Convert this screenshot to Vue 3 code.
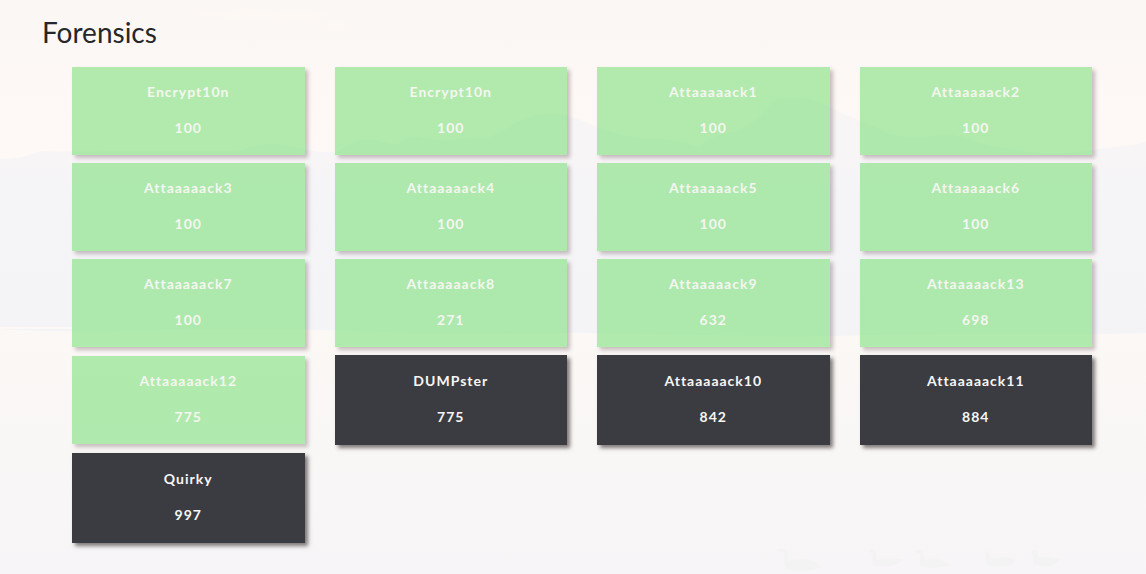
<script setup>
const challenges = [
  { name: 'Encrypt10n', value: 100, solved: true },
  { name: 'Encrypt10n', value: 100, solved: true },
  { name: 'Attaaaaack1', value: 100, solved: true },
  { name: 'Attaaaaack2', value: 100, solved: true },
  { name: 'Attaaaaack3', value: 100, solved: true },
  { name: 'Attaaaaack4', value: 100, solved: true },
  { name: 'Attaaaaack5', value: 100, solved: true },
  { name: 'Attaaaaack6', value: 100, solved: true },
  { name: 'Attaaaaack7', value: 100, solved: true },
  { name: 'Attaaaaack8', value: 271, solved: true },
  { name: 'Attaaaaack9', value: 632, solved: true },
  { name: 'Attaaaaack13', value: 698, solved: true },
  { name: 'Attaaaaack12', value: 775, solved: true },
  { name: 'DUMPster', value: 775, solved: false },
  { name: 'Attaaaaack10', value: 842, solved: false },
  { name: 'Attaaaaack11', value: 884, solved: false },
  { name: 'Quirky', value: 997, solved: false },
]
</script>

<template>
  <div class="page">
    <svg class="scenery" viewBox="0 0 1146 574" preserveAspectRatio="none" aria-hidden="true">
      <defs>
        <linearGradient id="sky" x1="0" y1="0" x2="0" y2="1">
          <stop offset="0" stop-color="#fbf7f4" />
          <stop offset="0.45" stop-color="#fef9f6" />
          <stop offset="1" stop-color="#fef9f6" />
        </linearGradient>
        <linearGradient id="hills" x1="0" y1="0" x2="0" y2="1">
          <stop offset="0" stop-color="#f8f5f5" />
          <stop offset="0.25" stop-color="#f7f5f6" />
          <stop offset="0.4" stop-color="#f5f4f7" />
          <stop offset="1" stop-color="#f4f4f7" />
        </linearGradient>
        <linearGradient id="lake" x1="0" y1="0" x2="0" y2="1">
          <stop offset="0" stop-color="#fbf8f5" />
          <stop offset="0.5" stop-color="#f9f7f6" />
          <stop offset="1" stop-color="#f7f5f7" />
        </linearGradient>
      </defs>
      <rect width="1146" height="340" fill="url(#sky)" />
      <path class="cloud" d="M192 14c20-3 32 2 47-5 15-3 25 4 40 3 20-4 35 0 50 4-35 5-60 1-75 1-25 3-40-2-62-3zM326 25c8-6 14-3 22 0-6 4-14 3-22 0z" />
      <path fill="url(#hills)" d="M0 159c18 0 28-3 41-8 28 1 50 0 70 0h126c20-6 34-10 48-6 24 6 35 8 51 7 15-10 26-13 40-12 12 3 18 6 25 2 8-6 12-6 16-5 10 3 20 3 34 4 12-4 20-4 33-2 12-3 24-12 34-17 12-5 18-8 30-8 12-1 20 2 30 5 26 11 45 18 70 20 23-1 37 4 51 8 10-10 22-14 36-15 13-8 26-14 31-22 4-8 10-11 20-12 25-1 36 5 50 12 18 9 32 13 48 21 14 7 34 8 66 3 20 4 31 12 59 14 30 8 69 5 89 1 13-2 29-1 49-8v200H0z" />
      <path fill="url(#lake)" d="M0 329c80 5 140 1 215 0 100-2 180 6 290 4 130-1 210 4 330 3 110-4 220-1 311-3v241H0z" />
      <path class="shore" d="M0 328h72M1092 346l54-2" />
      <g class="swans">
        <path d="M778 551c3-4 9-3 10 2v8c10-3 27-3 33 6-10 5-24 5-35 2-3-5-1-11-2-16-2-2-4-1-6-2z" />
        <path d="M869 552c3-4 7-2 7 2v6c9-2 18-1 26-1-2 6-10 8-29 7-2-5 1-9-1-13z" />
        <path d="M915 552c3-4 8-2 8 3 1 3 3 4 3 5 9-3 17 0 24 5-9 3-20 4-29 1-3-6 1-9-1-13z" />
        <path d="M985 552c4-2 5 2 5 6 9 0 18-2 25 2-1 6-15 8-28 5-2-5 0-8-2-13z" />
        <path d="M1031 552c4-4 8-1 7 5 8 1 16-1 22 3-4 6-14 8-26 5-2-4 1-8-3-13z" />
      </g>
    </svg>

    <main class="category">
      <h3 class="title">Forensics</h3>
      <div class="grid">
        <button
          v-for="(challenge, index) in challenges"
          :key="index"
          type="button"
          class="card"
          :class="{ solved: challenge.solved }"
        >
          <span>{{ challenge.name }}</span>
          <span>{{ challenge.value }}</span>
        </button>
      </div>
    </main>
  </div>
</template>

<style>
body {
  margin: 0;
  background: #f7f5f7;
}
</style>

<style scoped>
.page {
  position: relative;
  box-sizing: border-box;
  min-height: 100vh;
  font-family: Lato, "Liberation Sans", sans-serif;
}

.scenery {
  position: absolute;
  inset: 0;
  width: 100%;
  height: 100%;
}

.cloud {
  fill: #fdf8f4;
}

.shore {
  fill: none;
  stroke: #fbf8f5;
  stroke-width: 2;
}

.swans {
  fill: #f3f3f3;
}

.category {
  position: relative;
  padding: 15px 54px 31px 42px;
}

.title {
  margin: 0 0 18px;
  color: #26272b;
  font-size: 28px;
  font-weight: 400;
  line-height: 34px;
}

.grid {
  display: grid;
  grid-template-columns: repeat(4, minmax(0, 1fr));
  align-items: center;
  gap: 8px 30px;
  padding-left: 30px;
}

.card {
  display: flex;
  flex-direction: column;
  align-items: center;
  gap: 16px;
  padding: 16px 12px 18px;
  border: 0;
  background: rgba(47, 49, 56, 0.95);
  box-shadow: 3px 3px 4px rgba(60, 50, 50, 0.65);
  color: #f8f6f5;
  font-family: inherit;
  font-size: 14px;
  font-weight: 700;
  line-height: 20px;
  letter-spacing: 1px;
  cursor: pointer;
}

.card.solved {
  padding: 15px 12px 17px;
  background: rgba(101, 220, 100, 0.5);
  box-shadow: 3px 3px 4px rgba(80, 50, 60, 0.3);
  color: #f5f6f1;
}
</style>
